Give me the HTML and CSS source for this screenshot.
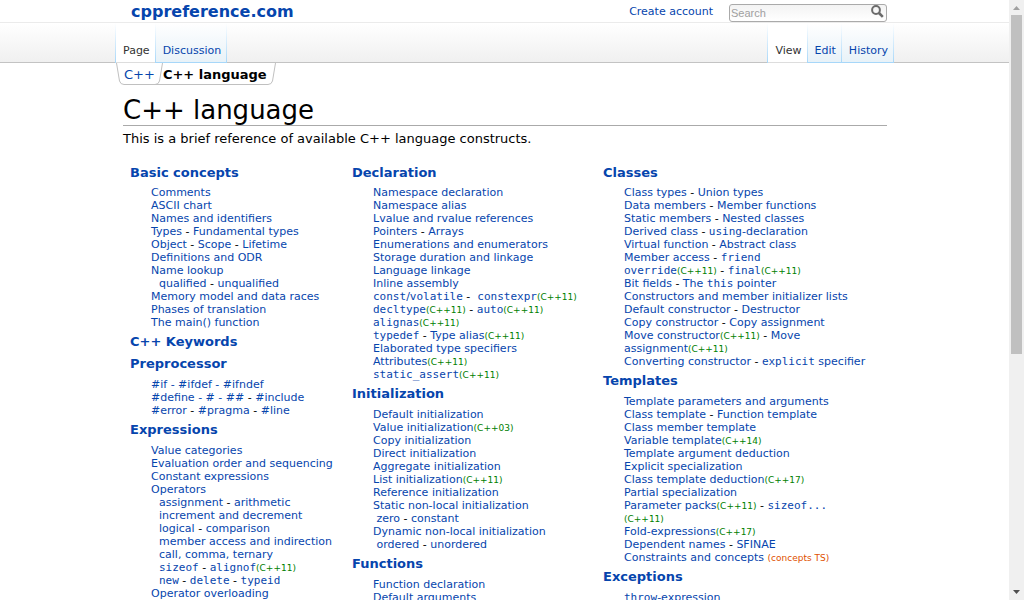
FILE: index.html
```html
<!DOCTYPE html>
<html lang="en">
<head>
<meta charset="utf-8">
<title>C++ language - cppreference.com</title>
<link rel="stylesheet" href="styles.css">
</head>
<body>
<div class="window">
<div class="page">
  <header class="top">
    <div class="wrap top-row">
      <a class="brand" href="#">cppreference.com</a>
      <a class="account" href="#">Create account</a>
      <form class="search">
        <input class="search-input" type="search" placeholder="Search" aria-label="Search">
        <button class="search-button" type="button" aria-label="Go">
          <svg width="13" height="13" viewBox="0 0 13 13"><circle cx="5" cy="5" r="3.9" fill="none" stroke="#6b6b6b" stroke-width="2"/><path d="M8 8l3.8 3.8" stroke="#6b6b6b" stroke-width="2.6"/></svg>
        </button>
      </form>
    </div>
  </header>
  <nav class="strip">
    <div class="wrap strip-row">
      <div class="tabs">
        <a class="tab current" href="#">Page</a><a class="tab" href="#">Discussion</a>
      </div>
      <div class="tabs">
        <a class="tab current" href="#">View</a><a class="tab" href="#">Edit</a><a class="tab" href="#">History</a>
      </div>
    </div>
  </nav>
  <div class="wrap">
    <nav class="crumbs" aria-label="Breadcrumb">
      <svg class="crumb-edge" width="8" height="22" viewBox="0 0 8 22"><path d="M.5 0L3.500 18Q4.500 21.500 8 21.500" fill="none" stroke="#c0c0c0"/></svg>
      <a class="crumb" href="#">C++</a>
      <svg class="crumb-edge" width="8" height="22" viewBox="0 0 8 22"><path d="M7.500 0L4.500 18Q3.500 21.500 0 21.500H8" fill="none" stroke="#c0c0c0"/></svg>
      <span class="crumb crumb-current">C++ language</span>
      <svg class="crumb-edge" width="8" height="22" viewBox="0 0 8 22"><path d="M7.500 0L4.500 18Q3.500 21.500 0 21.500" fill="none" stroke="#c0c0c0"/></svg>
    </nav>
    <main class="content">
      <h1 class="title">C++ language</h1>
      <p class="intro">This is a brief reference of available C++ language constructs.</p>
      <div class="columns">
        <div class="column">
          <section class="group">
            <h2 class="head"><a href="#">Basic concepts</a></h2>
            <ul class="list">
              <li><a href="#">Comments</a></li>
              <li><a href="#">ASCII chart</a></li>
              <li><a href="#">Names and identifiers</a></li>
              <li><a href="#">Types</a> - <a href="#">Fundamental types</a></li>
              <li><a href="#">Object</a> - <a href="#">Scope</a> - <a href="#">Lifetime</a></li>
              <li><a href="#">Definitions and ODR</a></li>
              <li><a href="#">Name lookup</a></li>
              <li class="sub"><a href="#">qualified</a> - <a href="#">unqualified</a></li>
              <li><a href="#">Memory model and data races</a></li>
              <li><a href="#">Phases of translation</a></li>
              <li><a href="#">The main() function</a></li>
            </ul>
          </section>
          <section class="group"><h2 class="head"><a href="#">C++ Keywords</a></h2></section>
          <section class="group">
            <h2 class="head"><a href="#">Preprocessor</a></h2>
            <ul class="list">
              <li><a href="#">#if - #ifdef - #ifndef</a></li>
              <li><a href="#">#define - # - ##</a> - <a href="#">#include</a></li>
              <li><a href="#">#error</a> - <a href="#">#pragma</a> - <a href="#">#line</a></li>
            </ul>
          </section>
          <section class="group">
            <h2 class="head"><a href="#">Expressions</a></h2>
            <ul class="list">
              <li><a href="#">Value categories</a></li>
              <li><a href="#">Evaluation order and sequencing</a></li>
              <li><a href="#">Constant expressions</a></li>
              <li><a href="#">Operators</a></li>
              <li class="sub"><a href="#">assignment</a> - <a href="#">arithmetic</a></li>
              <li class="sub"><a href="#">increment and decrement</a></li>
              <li class="sub"><a href="#">logical</a> - <a href="#">comparison</a></li>
              <li class="sub"><a href="#">member access and indirection</a></li>
              <li class="sub"><a href="#">call, comma, ternary</a></li>
              <li class="sub"><a href="#"><code>sizeof</code></a> - <a href="#"><code>alignof</code></a><span class="mark">(C++11)</span></li>
              <li class="sub"><a href="#"><code>new</code></a> - <a href="#"><code>delete</code></a> - <a href="#"><code>typeid</code></a></li>
              <li><a href="#">Operator overloading</a></li>
            </ul>
          </section>
        </div>
        <div class="column">
          <section class="group">
            <h2 class="head"><a href="#">Declaration</a></h2>
            <ul class="list">
              <li><a href="#">Namespace declaration</a></li>
              <li><a href="#">Namespace alias</a></li>
              <li><a href="#">Lvalue and rvalue references</a></li>
              <li><a href="#">Pointers</a> - <a href="#">Arrays</a></li>
              <li><a href="#">Enumerations and enumerators</a></li>
              <li><a href="#">Storage duration and linkage</a></li>
              <li><a href="#">Language linkage</a></li>
              <li><a href="#">Inline assembly</a></li>
              <li><a href="#"><code>const</code>/<code>volatile</code></a> - &nbsp;<a href="#"><code>constexpr</code></a><span class="mark">(C++11)</span></li>
              <li><a href="#"><code>decltype</code></a><span class="mark">(C++11)</span> - <a href="#"><code>auto</code></a><span class="mark">(C++11)</span></li>
              <li><a href="#"><code>alignas</code></a><span class="mark">(C++11)</span></li>
              <li><a href="#"><code>typedef</code></a> - <a href="#">Type alias</a><span class="mark">(C++11)</span></li>
              <li><a href="#">Elaborated type specifiers</a></li>
              <li><a href="#">Attributes</a><span class="mark">(C++11)</span></li>
              <li><a href="#"><code>static_assert</code></a><span class="mark">(C++11)</span></li>
            </ul>
          </section>
          <section class="group">
            <h2 class="head"><a href="#">Initialization</a></h2>
            <ul class="list">
              <li><a href="#">Default initialization</a></li>
              <li><a href="#">Value initialization</a><span class="mark">(C++03)</span></li>
              <li><a href="#">Copy initialization</a></li>
              <li><a href="#">Direct initialization</a></li>
              <li><a href="#">Aggregate initialization</a></li>
              <li><a href="#">List initialization</a><span class="mark">(C++11)</span></li>
              <li><a href="#">Reference initialization</a></li>
              <li><a href="#">Static non-local initialization</a></li>
              <li>&nbsp;<a href="#">zero</a> - <a href="#">constant</a></li>
              <li><a href="#">Dynamic non-local initialization</a></li>
              <li>&nbsp;<a href="#">ordered</a> - <a href="#">unordered</a></li>
            </ul>
          </section>
          <section class="group">
            <h2 class="head"><a href="#">Functions</a></h2>
            <ul class="list">
              <li><a href="#">Function declaration</a></li>
              <li><a href="#">Default arguments</a></li>
            </ul>
          </section>
        </div>
        <div class="column">
          <section class="group">
            <h2 class="head"><a href="#">Classes</a></h2>
            <ul class="list">
              <li><a href="#">Class types</a> - <a href="#">Union types</a></li>
              <li><a href="#">Data members</a> - <a href="#">Member functions</a></li>
              <li><a href="#">Static members</a> - <a href="#">Nested classes</a></li>
              <li><a href="#">Derived class</a> - <a href="#"><code>using</code>-declaration</a></li>
              <li><a href="#">Virtual function</a> - <a href="#">Abstract class</a></li>
              <li><a href="#">Member access</a> - <a href="#"><code>friend</code></a></li>
              <li><a href="#"><code>override</code></a><span class="mark">(C++11)</span> - <a href="#"><code>final</code></a><span class="mark">(C++11)</span></li>
              <li><a href="#">Bit fields</a> - <a href="#">The <code>this</code> pointer</a></li>
              <li><a href="#">Constructors and member initializer lists</a></li>
              <li><a href="#">Default constructor</a> - <a href="#">Destructor</a></li>
              <li><a href="#">Copy constructor</a> - <a href="#">Copy assignment</a></li>
              <li><a href="#">Move constructor</a><span class="mark">(C++11)</span> - <a href="#">Move<br>assignment</a><span class="mark">(C++11)</span></li>
              <li><a href="#">Converting constructor</a> - <a href="#"><code>explicit</code> specifier</a></li>
            </ul>
          </section>
          <section class="group">
            <h2 class="head"><a href="#">Templates</a></h2>
            <ul class="list">
              <li><a href="#">Template parameters and arguments</a></li>
              <li><a href="#">Class template</a> - <a href="#">Function template</a></li>
              <li><a href="#">Class member template</a></li>
              <li><a href="#">Variable template</a><span class="mark">(C++14)</span></li>
              <li><a href="#">Template argument deduction</a></li>
              <li><a href="#">Explicit specialization</a></li>
              <li><a href="#">Class template deduction</a><span class="mark">(C++17)</span></li>
              <li><a href="#">Partial specialization</a></li>
              <li><a href="#">Parameter packs</a><span class="mark">(C++11)</span> - <a href="#"><code>sizeof...</code></a><br><span class="mark">(C++11)</span></li>
              <li><a href="#">Fold-expressions</a><span class="mark">(C++17)</span></li>
              <li><a href="#">Dependent names</a> - <a href="#">SFINAE</a></li>
              <li><a href="#">Constraints and concepts</a> <span class="mark mark-ts">(concepts TS)</span></li>
            </ul>
          </section>
          <section class="group">
            <h2 class="head"><a href="#">Exceptions</a></h2>
            <ul class="list">
              <li><a href="#"><code>throw</code>-expression</a></li>
            </ul>
          </section>
        </div>
      </div>
    </main>
  </div>
</div>
<div class="scrollbar" aria-hidden="true">
  <svg class="arrow" width="7" height="4" viewBox="0 0 7 4"><path d="M0 4L3.500 0L7 4z" fill="#a0a0a0"/></svg>
  <div class="thumb"></div>
  <svg class="arrow" width="7" height="4" viewBox="0 0 7 4"><path d="M0 0H7L3.500 4z" fill="#505050"/></svg>
</div>
</div>
</body>
</html>
```
FILE: styles.css
```css
* { box-sizing: border-box; }

body {
  margin: 0;
  background: #fff;
  color: #000;
  font-family: "DejaVu Sans", sans-serif;
  font-size: 11px;
}

a { color: #0645ad; text-decoration: none; }

.window {
  display: grid;
  grid-template-columns: 1fr 15px;
  height: 100vh;
  overflow: hidden;
}

.page { min-width: 0; overflow: hidden; }

.wrap {
  max-width: 779px;
  margin: 0 auto;
}

.top { border-bottom: 1px solid #ebebeb; }

.top-row {
  display: flex;
  align-items: flex-start;
  height: 22px;
  padding: 0 7px 0 16px;
}

.brand {
  flex: 1;
  font-size: 16px;
  font-weight: bold;
  line-height: 24px;
}

.account { line-height: 24px; }

.search {
  display: flex;
  align-items: center;
  width: 158px;
  height: 18px;
  margin: 4px 0 0 16px;
  border: 1px solid #aaa;
  border-radius: 3px;
  background: linear-gradient(#f3f3f3, #fff);
}

.search-input {
  flex: 1;
  min-width: 0;
  padding: 0 1px;
  border: 0;
  outline: 0;
  background: none;
  font: 11px "Liberation Sans", sans-serif;
}

.search-input::placeholder { color: #a0a0a0; }

.search-button {
  display: flex;
  padding: 0 2px 4px 0;
  border: 0;
  background: none;
}

.strip {
  border-bottom: 1px solid #c3c3c3;
  background: linear-gradient(#fff, #f0f0f0);
}

.strip-row {
  display: flex;
  justify-content: space-between;
  height: 39px;
}

.tabs {
  display: flex;
  height: 40px;
  background: linear-gradient(#fff, #a7d7f9);
  padding: 0 1px;
  gap: 1px;
}

.tab {
  padding: 20px 5px 0 7px;
  border-bottom: 1px solid #a7d7f9;
  background: linear-gradient(#fff, #e8f2f8);
  line-height: 15px;
}

.tab.current {
  border-bottom-color: #ddd;
  background: #fff;
  color: #333;
}

.crumbs {
  display: flex;
  height: 22px;
  padding-left: 1px;
}

.crumb-edge { flex: none; }

.crumb {
  border-bottom: 1px solid #c0c0c0;
  font-size: 13px;
  line-height: 24px;
}

.crumb-current {
  padding-right: 1px;
  font-size: 13px;
  font-weight: bold;
}

.content { padding: 0 7px 0 8px; }

.title {
  margin: 10px 0 0;
  border-bottom: 1px solid #aaa;
  font-size: 26px;
  font-weight: normal;
  line-height: 30px;
}

.intro {
  margin: 5px 0 0;
  font-size: 13px;
  line-height: 16px;
}

.columns {
  display: grid;
  grid-template-columns: 222fr 251fr 284fr;
  margin-top: 13px;
  padding-left: 7px;
}

.group { padding-top: 4px; }

.head {
  margin: 0;
  font-size: 13px;
  line-height: 18px;
}

.list {
  margin: 4px 0 0;
  padding: 0 0 0 21px;
  list-style: none;
  line-height: 13px;
  white-space: nowrap;
}

.group + .group .list { margin-top: 5px; }

.sub { padding-left: 8px; }

code {
  font-family: "DejaVu Sans Mono", monospace;
  font-size: 11px;
  line-height: 1;
}

.mark {
  color: #008000;
  font-size: 9px;
  line-height: 1;
}

.mark-ts { color: #e05000; }

.scrollbar {
  display: flex;
  flex-direction: column;
  align-items: center;
  padding: 6px 0;
  background: #f0f0f0;
}

.thumb {
  width: 11px;
  height: 339px;
  margin: 5px 0 auto;
  background: #c0c0c0;
}
```
